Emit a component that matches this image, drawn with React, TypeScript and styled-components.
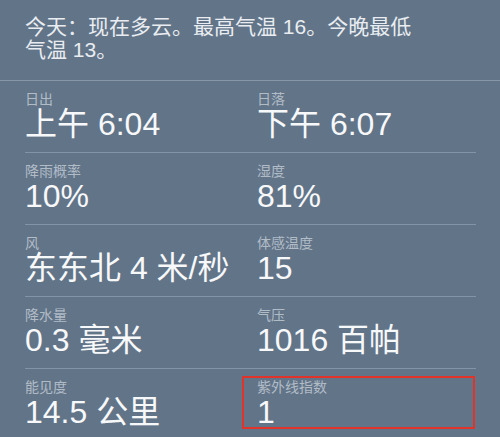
import styled, { createGlobalStyle } from 'styled-components';

const GlobalStyle = createGlobalStyle`
  html, body {
    margin: 0;
    padding: 0;
    background: #627488;
  }
  body {
    font-family: "Liberation Sans", "Noto Sans CJK SC", sans-serif;
  }
`;

interface Metric {
  label: string;
  value: string;
  highlighted?: boolean;
}

const rows: Metric[][] = [
  [
    { label: '日出', value: '上午 6:04' },
    { label: '日落', value: '下午 6:07' },
  ],
  [
    { label: '降雨概率', value: '10%' },
    { label: '湿度', value: '81%' },
  ],
  [
    { label: '风', value: '东东北 4 米/秒' },
    { label: '体感温度', value: '15' },
  ],
  [
    { label: '降水量', value: '0.3 毫米' },
    { label: '气压', value: '1016 百帕' },
  ],
  [
    { label: '能见度', value: '14.5 公里' },
    { label: '紫外线指数', value: '1', highlighted: true },
  ],
];

const Panel = styled.div`
  width: 500px;
  height: 437px;
  overflow: hidden;
  background: #627488;
`;

const Summary = styled.div`
  padding: 15px 25px 19px;
  border-bottom: 1px solid #8797a8;
`;

const SummaryText = styled.p`
  margin: 0;
  max-width: 396px;
  font-size: 21px;
  line-height: 23px;
  color: #e9edf1;
`;

const Details = styled.div`
  padding: 0 24px 0 25px;
`;

const Row = styled.div<{ $last?: boolean }>`
  display: grid;
  grid-template-columns: 232px 1fr;
  border-bottom: ${(p) => (p.$last ? 'none' : '1px solid #8394a6')};
`;

const Cell = styled.div<{ $highlighted?: boolean }>`
  padding: 10px 0 11px;
  ${(p) =>
    p.$highlighted &&
    `
    box-sizing: border-box;
    height: 53px;
    margin: 7px 1px 0 -15px;
    padding: 1px 0 0 13px;
    border: 2px solid #e2332a;
  `}
`;

const Label = styled.div`
  font-size: 14px;
  line-height: 16px;
  color: #b1bcc7;
`;

const Value = styled.div`
  font-size: 32px;
  line-height: 34px;
  color: #f7f8fa;
  white-space: nowrap;
`;

export default function App() {
  return (
    <Panel>
      <GlobalStyle />
      <Summary>
        <SummaryText>今天：现在多云。最高气温 16。今晚最低气温 13。</SummaryText>
      </Summary>
      <Details>
        {rows.map((row, i) => (
          <Row key={i} $last={i === rows.length - 1}>
            {row.map((m) => (
              <Cell key={m.label} $highlighted={m.highlighted}>
                <Label>{m.label}</Label>
                <Value>{m.value}</Value>
              </Cell>
            ))}
          </Row>
        ))}
      </Details>
    </Panel>
  );
}
